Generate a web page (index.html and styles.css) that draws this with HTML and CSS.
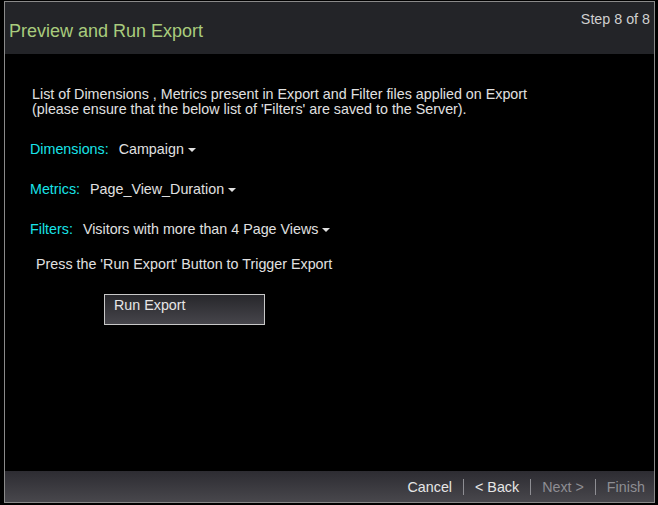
FILE: index.html
```html
<!DOCTYPE html>
<html>
<head>
<meta charset="utf-8">
<link rel="stylesheet" href="styles.css">
</head>
<body>
<div class="panel">
  <div class="header">
    <div class="title">Preview and Run Export</div>
    <div class="step">Step 8 of 8</div>
  </div>
  <div class="content">
    <p class="intro">List of Dimensions , Metrics present in Export and Filter files applied on Export<br>(please ensure that the below list of 'Filters' are saved to the Server).</p>
    <div class="row"><span class="label">Dimensions:</span><span class="value">Campaign</span><span class="caret"></span></div>
    <div class="row"><span class="label">Metrics:</span><span class="value">Page_View_Duration</span><span class="caret"></span></div>
    <div class="row"><span class="label">Filters:</span><span class="value">Visitors with more than 4 Page Views</span><span class="caret"></span></div>
    <p class="press">Press the 'Run Export' Button to Trigger Export</p>
    <button class="run">Run Export</button>
  </div>
  <div class="footer">
    <span class="link">Cancel</span><span class="sep"></span>
    <span class="link">&lt; Back</span><span class="sep"></span>
    <span class="link dim">Next &gt;</span><span class="sep"></span>
    <span class="link dim">Finish</span>
  </div>
</div>
</body>
</html>
```

FILE: styles.css
```css
* { box-sizing: border-box; }
html, body { margin: 0; padding: 0; background: #000; }
body {
  font-family: "Liberation Sans", Arial, sans-serif;
  width: 658px;
  height: 505px;
  overflow: hidden;
}
.panel {
  margin: 1px 0 0 4px;
  width: 651px;
  height: 502px;
  border: 1px solid #8a8a8a;
  display: flex;
  flex-direction: column;
  background: #000;
}
.header {
  height: 52px;
  background: #232428;
  position: relative;
  flex: none;
}
.title {
  position: absolute;
  left: 4px;
  top: 19px;
  font-size: 18px;
  color: #a9cc7d;
}
.step {
  position: absolute;
  right: 4px;
  top: 9px;
  font-size: 14.3px;
  color: #d0d0d0;
}
.content {
  flex: 1;
  padding: 33px 0 0 25px;
  color: #e0e0e0;
  font-size: 14.3px;
}
.intro {
  margin: 0 0 0 2px;
  line-height: 15px;
}
.row {
  display: flex;
  align-items: center;
  height: 16px;
  margin-top: 24px;
}
.label { color: #19e3e8; margin-right: 10px; }
.value { color: #e0e0e0; }
.caret {
  width: 0; height: 0;
  border-left: 4px solid transparent;
  border-right: 4px solid transparent;
  border-top: 4px solid #e0e0e0;
  margin-left: 4px;
  margin-top: 1px;
}
.press {
  margin: 19px 0 0 6px;
  line-height: 16px;
}
.run {
  margin: 22px 0 0 74px;
  width: 161px;
  height: 31px;
  border: 1px solid #c8c8c8;
  background: linear-gradient(#27272b, #46454b);
  color: #e6e6e6;
  font-family: inherit;
  font-size: 14.3px;
  text-align: left;
  padding: 2px 0 0 9px;
  line-height: 16px;
  display: flex;
  align-items: flex-start;
}
.footer {
  height: 31px;
  flex: none;
  background: linear-gradient(#2d2c32, #48474c);
  display: flex;
  align-items: center;
  justify-content: flex-end;
  padding-right: 9px;
  font-size: 14.3px;
}
.link { color: #e6e6e6; }
.link.dim { color: #8e8e93; }
.sep {
  width: 1px;
  height: 16px;
  background: #8e8e93;
  margin: 0 11px;
}
```
